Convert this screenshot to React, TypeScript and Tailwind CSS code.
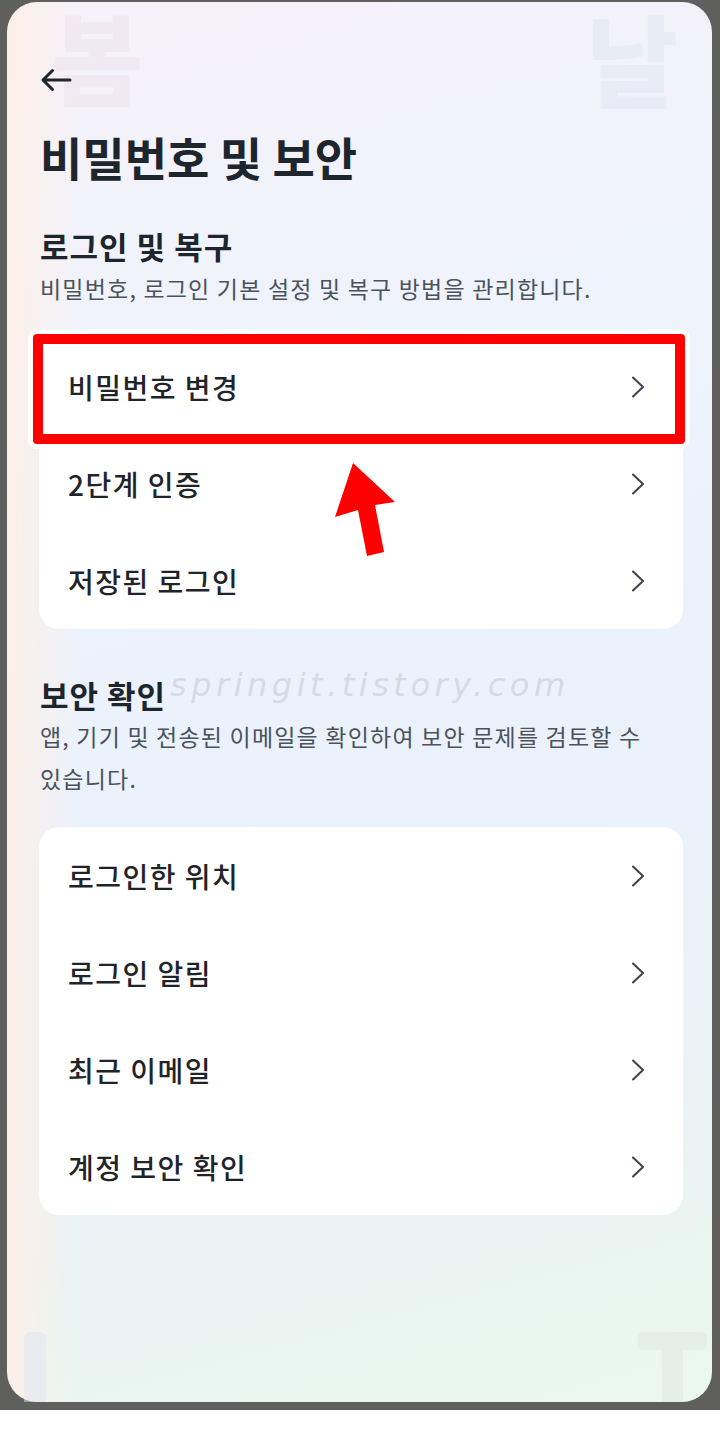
import React from 'react';

const Chevron = () => (
  <svg width="14" height="22" viewBox="0 0 14 22" fill="none">
    <path d="M2 1.5L12 11L2 20.5" stroke="#3b434c" strokeWidth="2" strokeLinecap="round" strokeLinejoin="round" />
  </svg>
);

const Row = ({ label }: { label: string }) => (
  <div className="flex h-[97px] items-center justify-between pl-[29px] pr-[38px]">
    <span className="text-[28px] font-medium leading-none tracking-[1.5px] text-[#1f2429]">{label}</span>
    <Chevron />
  </div>
);

export default function App() {
  return (
    <div className="relative h-[1440px] w-[720px] bg-white font-['Noto_Sans_CJK_KR','Noto_Sans',sans-serif]">
      <div className="h-[1410px] bg-[#5f605e] pb-[8px] pl-[7px] pr-[8px] pt-[2px]">
        <div className="relative h-full rounded-[30px] bg-[linear-gradient(90deg,#fcefe8_0%,rgba(252,239,232,0)_10%),linear-gradient(165deg,#f6f1f9_0%,#eef3fc_30%,#eaf1fb_60%,#e9f3f4_80%,#eaf8ee_100%)]">
          {/* faint watermark letters */}
          <span className="absolute left-[44px] top-[3px] text-[100px] font-black leading-none text-[#f0e6ee]/70">봄</span>
          <span className="absolute left-[579px] top-[5px] text-[100px] font-black leading-none text-[#dfe7f1]/60">날</span>
          <div className="absolute left-[17px] top-[1330px] h-[70px] w-[22px] rounded-t-[6px] bg-[#dde5ef]/50" />
          <div className="absolute left-[631px] top-[1330px] h-[70px] w-[69px]">
            <div className="h-[18px] rounded-[6px] bg-[#dfe9e3]/60" />
            <div className="mx-auto h-[52px] w-[21px] bg-[#dfe9e3]/60" />
          </div>

          <div className="relative pl-[33px] pr-[29px] pt-[66px]">
            <div className="h-[24px]">
              <svg width="32" height="24" viewBox="0 0 32 24" fill="none">
                <path d="M30 12H3M12.5 2.5L3 12L12.5 21.5" stroke="#1d252d" strokeWidth="3" strokeLinecap="round" strokeLinejoin="round" />
              </svg>
            </div>

            <h1 className="mt-[41px] text-[46px] font-bold leading-none text-[#1d252d]">비밀번호 및 보안</h1>

            <h2 className="mt-[51px] text-[31px] font-bold leading-none tracking-[1px] text-[#1d252d]">로그인 및 복구</h2>
            <p className="mt-[16px] text-[23px] leading-none tracking-[1.2px] text-[#4a525c]">
              비밀번호, 로그인 기본 설정 및 복구 방법을 관리합니다.
            </p>

            <div className="relative -ml-[1px] mt-[38px] rounded-[20px] bg-white">
              <Row label="비밀번호 변경" />
              <Row label="2단계 인증" />
              <Row label="저장된 로그인" />
              <div className="absolute -left-[6px] -top-[4px] h-[110px] w-[652px] rounded-[4px] border-[10px] border-[#ff0000] shadow-[0_0_0_5px_rgba(255,255,255,0.85)]" />
              <svg className="absolute left-[291px] top-[120px]" width="70" height="102" viewBox="0 0 70 102">
                <polygon points="23,5 65,44 45,47 54,94 37,98 28,52 5,59" fill="#ff0000" />
              </svg>
            </div>

            <div className="relative mt-[50px]">
              <h2 className="text-[31px] font-bold leading-none tracking-[1px] text-[#1d252d]">보안 확인</h2>
              <span className="absolute left-[130px] top-[-18px] font-['DejaVu_Sans',sans-serif] text-[32px] font-extralight italic tracking-[4.5px] text-[#cfd4dc]/80">
                springit.tistory.com
              </span>
            </div>
            <p className="mt-[5px] text-[23px] leading-[42px] tracking-[1.2px] text-[#4a525c]">
              앱, 기기 및 전송된 이메일을 확인하여 보안 문제를 검토할 수
              <br />
              있습니다.
            </p>

            <div className="-ml-[1px] mt-[28px] rounded-[20px] bg-white">
              <Row label="로그인한 위치" />
              <Row label="로그인 알림" />
              <Row label="최근 이메일" />
              <Row label="계정 보안 확인" />
            </div>
          </div>
        </div>
      </div>
    </div>
  );
}
